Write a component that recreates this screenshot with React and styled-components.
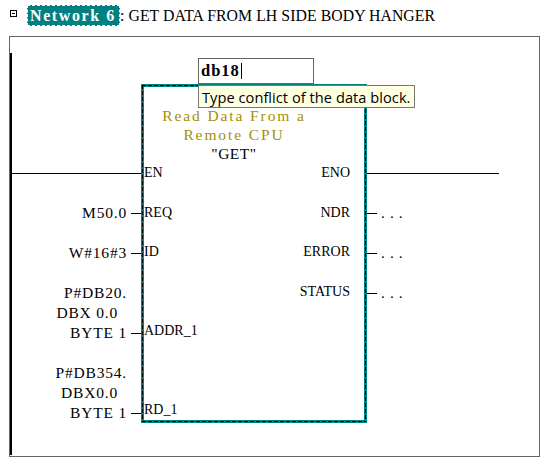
import React from 'react';
import styled, { createGlobalStyle } from 'styled-components';

const Global = createGlobalStyle`
  html, body { margin: 0; padding: 0; background: #fff; }
  body { width: 545px; height: 464px; overflow: hidden; font-family: "Liberation Serif", serif; color: #000; }
`;

const Page = styled.div`
  width: 545px;
  height: 464px;
`;

const Header = styled.div`
  display: flex;
  align-items: center;
  height: 21px;
  margin: 5px 0 10px 10px;
`;

const Collapse = styled.svg`
  align-self: flex-start;
  margin: 5px 10px 0 0;
  flex: none;
`;

const Badge = styled.span`
  box-sizing: border-box;
  width: 93px;
  height: 21px;
  padding-left: 2px;
  background: #008080;
  border: 1px dashed #fff;
  color: #fff;
  font: bold 16px/19px "Liberation Serif", serif;
  letter-spacing: 1.6px;
  white-space: pre;
`;

const Title = styled.span`
  font: 15.8px/21px "Liberation Serif", serif;
  letter-spacing: 0.05px;
  white-space: pre;
`;

const Frame = styled.div`
  box-sizing: border-box;
  margin-left: 9px;
  width: 531px;
  height: 421px;
  border: 1px solid #666;
  display: flex;
`;

const Rail = styled.div`
  width: 2px;
  background: #000;
  margin: 16px 0 1px;
  flex: none;
`;

const Diagram = styled.div`
  position: relative;
  flex: 1;
  display: flex;
  align-items: flex-start;
`;

const Column = styled.div`
  display: flex;
  flex-direction: column;
  padding-top: 126px;
  width: ${(p) => p.$width};
  flex: none;
`;

const Row = styled.div`
  height: 20px;
  display: flex;
  align-items: center;
  justify-content: ${(p) => (p.$end ? 'flex-end' : 'flex-start')};
  font: 15.5px/20px "Liberation Serif", serif;
  letter-spacing: 0.8px;
  white-space: pre;
`;

const Operand = styled.span`
  margin-right: ${(p) => p.$shift || 0}px;
`;

const Wire = styled.div`
  height: 1px;
  background: #000;
  margin-top: 1px;
  flex: ${(p) => (p.$length ? 'none' : '1')};
  width: ${(p) => p.$length || 'auto'};
  margin-left: ${(p) => p.$gap || '0'};
`;

const Dots = styled.span`
  margin-left: 4px;
  letter-spacing: 5px;
`;

const Block = styled.div`
  position: relative;
  box-sizing: border-box;
  width: 226px;
  height: 339px;
  margin-top: 47px;
  border: 3px solid #008080;
  padding-top: 19px;
  display: flex;
  flex-direction: column;
  flex: none;

  &::after {
    content: '';
    position: absolute;
    inset: -2px;
    pointer-events: none;
    background:
      repeating-linear-gradient(90deg, #000 0 4px, transparent 4px 6px) top / 100% 1px no-repeat,
      repeating-linear-gradient(90deg, #000 0 4px, transparent 4px 6px) bottom / 100% 1px no-repeat,
      repeating-linear-gradient(180deg, #000 0 4px, transparent 4px 6px) left / 1px 100% no-repeat,
      repeating-linear-gradient(180deg, #000 0 4px, transparent 4px 6px) right / 1px 100% no-repeat;
  }
`;

const BlockTitle = styled.div`
  height: 19px;
  padding-right: 40px;
  text-align: center;
  font: 15.5px/19px "Liberation Serif", serif;
  letter-spacing: ${(p) => (p.$name ? '0.5px' : '1.9px')};
  color: ${(p) => (p.$name ? '#000' : '#a39000')};
  white-space: pre;
`;

const PinRow = styled.div`
  height: 20px;
  display: flex;
  justify-content: space-between;
  align-items: center;
  padding-right: 14px;
  font: 14px/20px "Liberation Serif", serif;
`;

const Editor = styled.div`
  position: absolute;
  left: 186px;
  top: 21px;
  box-sizing: border-box;
  width: 116px;
  height: 26px;
  border: 1px solid #666;
  background: #fff;
  padding-left: 2px;
  display: flex;
  align-items: center;
  font: bold 16.5px/20px "Liberation Serif", serif;
  letter-spacing: 1px;
  z-index: 2;
`;

const Caret = styled.span`
  display: inline-block;
  width: 1px;
  height: 16px;
  background: #000;
  margin-left: 1px;
`;

const Tooltip = styled.div`
  position: absolute;
  left: 186px;
  top: 48px;
  box-sizing: border-box;
  width: 217px;
  height: 23px;
  border: 1px solid #767676;
  background: #ffffe1;
  padding-left: 3px;
  display: flex;
  align-items: center;
  font: 14.6px/20px "Open Sans", sans-serif;
  letter-spacing: 0.05px;
  white-space: nowrap;
  z-index: 3;
`;

const rows = [
  { in: 'EN', out: 'ENO', inWire: 'full', outWire: 'full' },
  {},
  { in: 'REQ', out: 'NDR', operand: 'M50.0' },
  {},
  { in: 'ID', out: 'ERROR', operand: 'W#16#3' },
  {},
  { out: 'STATUS', text: 'P#DB20.' },
  { text: 'DBX 0.0', shift: 9 },
  { in: 'ADDR_1', operand: 'BYTE 1' },
  {},
  { text: 'P#DB354.' },
  { text: 'DBX0.0', shift: 9 },
  { in: 'RD_1', operand: 'BYTE 1' },
];

export default function App() {
  return (
    <Page>
      <Global />
      <Header>
        <Collapse width="7" height="7" viewBox="0 0 7 7">
          <rect x="0.5" y="0.5" width="6" height="6" fill="none" stroke="#000" strokeWidth="1" />
          <line x1="2" y1="3.5" x2="5" y2="3.5" stroke="#000" strokeWidth="1" />
        </Collapse>
        <Badge>Network 6</Badge>
        <Title>: GET DATA FROM LH SIDE BODY HANGER</Title>
      </Header>
      <Frame>
        <Rail />
        <Diagram>
          <Column $width="129px">
            {rows.map((r, i) => (
              <Row key={i} $end>
                {r.inWire === 'full' ? (
                  <Wire />
                ) : r.operand ? (
                  <>
                    <Operand>{r.operand}</Operand>
                    <Wire $length="10px" $gap="4px" />
                  </>
                ) : r.text ? (
                  <>
                    <Operand $shift={r.shift}>{r.text}</Operand>
                    <Wire $length="0px" $gap="14px" />
                  </>
                ) : null}
              </Row>
            ))}
          </Column>
          <Block>
            <BlockTitle>Read Data From a</BlockTitle>
            <BlockTitle>Remote CPU</BlockTitle>
            <BlockTitle $name>"GET"</BlockTitle>
            {rows.map((r, i) => (
              <PinRow key={i}>
                <span>{r.in || ''}</span>
                <span>{r.out || ''}</span>
              </PinRow>
            ))}
          </Block>
          <Column $width="auto">
            {rows.map((r, i) => (
              <Row key={i}>
                {r.outWire === 'full' ? (
                  <Wire $length="132px" />
                ) : r.out ? (
                  <>
                    <Wire $length="10px" />
                    <Dots>...</Dots>
                  </>
                ) : null}
              </Row>
            ))}
          </Column>
          <Editor>
            db18
            <Caret />
          </Editor>
          <Tooltip>Type conflict of the data block.</Tooltip>
        </Diagram>
      </Frame>
    </Page>
  );
}
